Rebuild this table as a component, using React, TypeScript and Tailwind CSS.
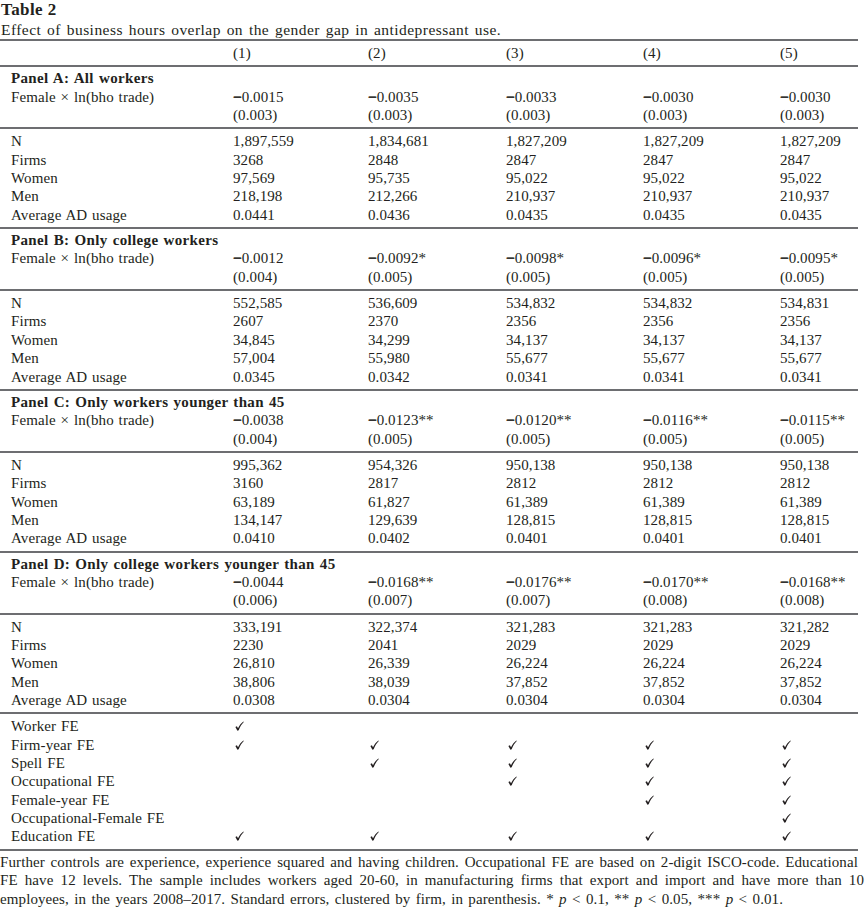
const cols = ["(1)", "(2)", "(3)", "(4)", "(5)"];

type Panel = {
  title: string;
  coef: string[];
  se: string[];
  n: string[];
  firms: string[];
  women: string[];
  men: string[];
  ad: string[];
};

const panels: Panel[] = [
  {
    title: "Panel A: All workers",
    coef: ["−0.0015", "−0.0035", "−0.0033", "−0.0030", "−0.0030"],
    se: ["(0.003)", "(0.003)", "(0.003)", "(0.003)", "(0.003)"],
    n: ["1,897,559", "1,834,681", "1,827,209", "1,827,209", "1,827,209"],
    firms: ["3268", "2848", "2847", "2847", "2847"],
    women: ["97,569", "95,735", "95,022", "95,022", "95,022"],
    men: ["218,198", "212,266", "210,937", "210,937", "210,937"],
    ad: ["0.0441", "0.0436", "0.0435", "0.0435", "0.0435"],
  },
  {
    title: "Panel B: Only college workers",
    coef: ["−0.0012", "−0.0092*", "−0.0098*", "−0.0096*", "−0.0095*"],
    se: ["(0.004)", "(0.005)", "(0.005)", "(0.005)", "(0.005)"],
    n: ["552,585", "536,609", "534,832", "534,832", "534,831"],
    firms: ["2607", "2370", "2356", "2356", "2356"],
    women: ["34,845", "34,299", "34,137", "34,137", "34,137"],
    men: ["57,004", "55,980", "55,677", "55,677", "55,677"],
    ad: ["0.0345", "0.0342", "0.0341", "0.0341", "0.0341"],
  },
  {
    title: "Panel C: Only workers younger than 45",
    coef: ["−0.0038", "−0.0123**", "−0.0120**", "−0.0116**", "−0.0115**"],
    se: ["(0.004)", "(0.005)", "(0.005)", "(0.005)", "(0.005)"],
    n: ["995,362", "954,326", "950,138", "950,138", "950,138"],
    firms: ["3160", "2817", "2812", "2812", "2812"],
    women: ["63,189", "61,827", "61,389", "61,389", "61,389"],
    men: ["134,147", "129,639", "128,815", "128,815", "128,815"],
    ad: ["0.0410", "0.0402", "0.0401", "0.0401", "0.0401"],
  },
  {
    title: "Panel D: Only college workers younger than 45",
    coef: ["−0.0044", "−0.0168**", "−0.0176**", "−0.0170**", "−0.0168**"],
    se: ["(0.006)", "(0.007)", "(0.007)", "(0.008)", "(0.008)"],
    n: ["333,191", "322,374", "321,283", "321,283", "321,282"],
    firms: ["2230", "2041", "2029", "2029", "2029"],
    women: ["26,810", "26,339", "26,224", "26,224", "26,224"],
    men: ["38,806", "38,039", "37,852", "37,852", "37,852"],
    ad: ["0.0308", "0.0304", "0.0304", "0.0304", "0.0304"],
  },
];

const fixedEffects: [string, boolean[]][] = [
  ["Worker FE", [true, false, false, false, false]],
  ["Firm-year FE", [true, true, true, true, true]],
  ["Spell FE", [false, true, true, true, true]],
  ["Occupational FE", [false, false, true, true, true]],
  ["Female-year FE", [false, false, false, true, true]],
  ["Occupational-Female FE", [false, false, false, false, true]],
  ["Education FE", [true, true, true, true, true]],
];

const rule = "border-t-2 border-[#6d6e71]";
const grid = "grid grid-cols-[233px_135px_138px_137px_137px_1fr] h-[18.35px] leading-[18.35px]";

// heavier minus like the typeset original
function Value({ v }: { v: string }) {
  if (v.startsWith("−")) {
    return (
      <>
        <span className="font-bold [-webkit-text-stroke:0.6px_#231f20]">−</span>
        {v.slice(1)}
      </>
    );
  }
  return <>{v}</>;
}

function Row({ label, values, bold }: { label: string; values?: string[]; bold?: boolean }) {
  return (
    <div className={grid}>
      <div className={`pl-[11px] whitespace-nowrap ${bold ? "font-bold tracking-[0.35px] [word-spacing:1px]" : "tracking-[0.1px] [word-spacing:1px]"}`}>
        {label}
      </div>
      {(values ?? ["", "", "", "", ""]).map((v, i) => (
        <div key={i} className="whitespace-nowrap tracking-[0.1px]">
          <Value v={v} />
        </div>
      ))}
    </div>
  );
}

function Check() {
  return (
    <svg width="9" height="10" viewBox="0 0 9 10" className="inline-block ml-[2px] mt-[4px] align-top">
      <path d="M0.4 6.1 L1.9 5.2 L3 7.2 C4.2 4.6 6 2.2 8.4 0.4 L8.8 1 C6.7 3 5 5.8 3.7 9.3 L2.4 9.7 Z" fill="#231f20" />
    </svg>
  );
}

export default function App() {
  return (
    <div className="w-[865px] h-[910px] bg-white overflow-hidden">
      <div className="w-[858px] font-['Liberation_Serif',serif] text-[15px] text-[#231f20]">
        <div className="font-bold text-[17px] leading-[20px] pl-[1px] tracking-[0.4px]">Table 2</div>
        <div className="leading-[19px] pl-[1px] text-[15.5px] tracking-[0.45px] [word-spacing:1.5px]">
          Effect of business hours overlap on the gender gap in antidepressant use.
        </div>

        <div className={`${rule} pt-[3px] pb-[3px]`}>
          <Row label="" values={cols} />
        </div>

        {panels.map((p) => (
          <div key={p.title}>
            <div className={`${rule} pt-[2px] pb-[3px]`}>
              <Row label={p.title} bold />
              <Row label="Female × ln(bho trade)" values={p.coef} />
              <Row label="" values={p.se} />
            </div>
            <div className={`${rule} pt-[3px] pb-[3px]`}>
              <Row label="N" values={p.n} />
              <Row label="Firms" values={p.firms} />
              <Row label="Women" values={p.women} />
              <Row label="Men" values={p.men} />
              <Row label="Average AD usage" values={p.ad} />
            </div>
          </div>
        ))}

        <div className={`${rule} pt-[3px] pb-[3px]`}>
          {fixedEffects.map(([label, marks]) => (
            <div key={label} className={grid}>
              <div className="pl-[11px] whitespace-nowrap tracking-[0.1px] [word-spacing:1px]">{label}</div>
              {marks.map((m, i) => (
                <div key={i}>{m ? <Check /> : null}</div>
              ))}
            </div>
          ))}
        </div>

        <div className={`${rule} pt-[2px] leading-[18.5px] tracking-[0.1px]`}>
          <div className="text-justify [text-align-last:justify] whitespace-nowrap">
            Further controls are experience, experience squared and having children. Occupational FE are based on 2-digit ISCO-code. Educational
          </div>
          <div className="text-justify [text-align-last:justify] whitespace-nowrap w-[864px]">
            FE have 12 levels. The sample includes workers aged 20-60, in manufacturing firms that export and import and have more than 10
          </div>
          <div className="whitespace-nowrap [word-spacing:1.5px]">
            employees, in the years 2008–2017. Standard errors, clustered by firm, in parenthesis. * <i>p</i> &lt; 0.1, ** <i>p</i> &lt; 0.05, *** <i>p</i> &lt; 0.01.
          </div>
        </div>
      </div>
    </div>
  );
}
